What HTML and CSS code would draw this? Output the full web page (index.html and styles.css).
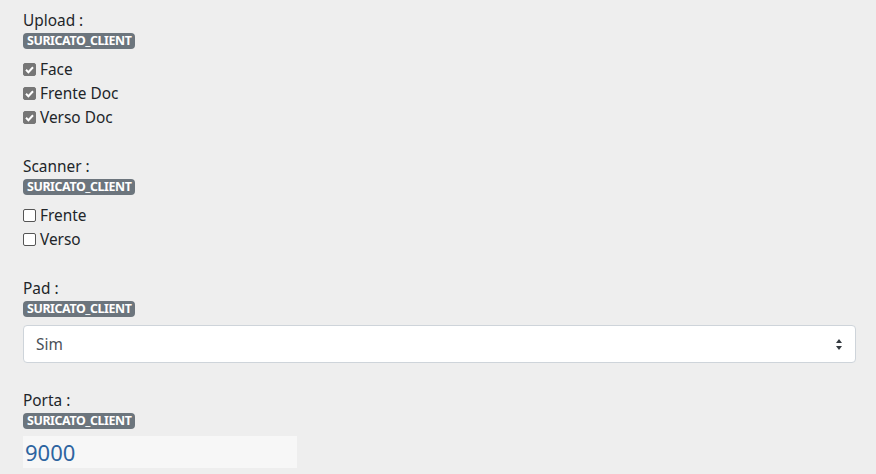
FILE: index.html
```html
<!DOCTYPE html>
<html lang="pt">
<head>
  <meta charset="UTF-8" />
  <meta name="viewport" content="width=device-width, initial-scale=1" />
  <title>Configuração</title>
  <link rel="stylesheet" href="styles.css">
</head>
<body>
  <form class="config">
    <div class="group">
      <label class="title">Upload :</label>
      <span class="badge">SURICATO_CLIENT</span>
      <div class="checks">
        <label class="check"><input type="checkbox" checked> Face</label>
        <label class="check"><input type="checkbox" checked> Frente Doc</label>
        <label class="check"><input type="checkbox" checked> Verso Doc</label>
      </div>
    </div>

    <div class="group">
      <label class="title">Scanner :</label>
      <span class="badge">SURICATO_CLIENT</span>
      <div class="checks">
        <label class="check"><input type="checkbox"> Frente</label>
        <label class="check"><input type="checkbox"> Verso</label>
      </div>
    </div>

    <div class="group">
      <label class="title">Pad :</label>
      <span class="badge">SURICATO_CLIENT</span>
      <select class="custom-select">
        <option selected>Sim</option>
        <option>Não</option>
      </select>
    </div>

    <div class="group">
      <label class="title">Porta :</label>
      <span class="badge">SURICATO_CLIENT</span>
      <input class="port" type="text" value="9000">
    </div>
  </form>
</body>
</html>
```

FILE: styles.css
```css
:root {
  --font-sans: "Noto Sans", "Open Sans", sans-serif;
  --color-text: #212529;
  --page-bg: #eeeeee;
  --badge-bg: #6c757d;
  --border: #ced4da;
}
*, *::before, *::after { box-sizing: border-box; }

html, body {
  margin: 0;
  padding: 0;
}
body {
  background: var(--page-bg);
  font-family: var(--font-sans);
  font-size: 15.4px;
  color: var(--color-text);
  overflow: hidden;
}
.config {
  padding: 10px 20px 0 23px;
}
.group {
  margin-bottom: 27px;
}
.title {
  display: block;
  line-height: 22px;
}
.badge {
  display: table;
  margin-top: 1px;
  padding: 2px 4px;
  background: var(--badge-bg);
  color: #fff;
  font-size: 12.4px;
  font-weight: 700;
  line-height: 12px;
  letter-spacing: -0.4px;
  border-radius: 4px;
}
.checks {
  margin-top: 8px;
}
.check {
  display: flex;
  align-items: center;
  gap: 4px;
  height: 24px;
}
.check input {
  appearance: none;
  -webkit-appearance: none;
  width: 13px;
  height: 13px;
  margin: 0;
  border: 1px solid #555;
  border-radius: 2px;
  background: #fff;
}
.check input:checked {
  border-color: #767676;
  background: #767676 url("data:image/svg+xml,%3Csvg xmlns='http://www.w3.org/2000/svg' viewBox='0 0 13 13'%3E%3Cpath d='M3 6.8l2.4 2.4L10 4.3' fill='none' stroke='%23fff' stroke-width='2'/%3E%3C/svg%3E") center / 13px 13px no-repeat;
}
.custom-select {
  display: block;
  width: 833px;
  height: 38px;
  margin-top: 8px;
  padding: 6px 28px 6px 12px;
  font-family: var(--font-sans);
  font-size: 15.4px;
  color: #495057;
  background: #fff url("data:image/svg+xml,%3Csvg xmlns='http://www.w3.org/2000/svg' viewBox='0 0 6 11'%3E%3Cpath d='M3 0L0 4h6zM3 11L0 7h6z' fill='%23343a40'/%3E%3C/svg%3E") right 13px center / 6px 11px no-repeat;
  border: 1px solid var(--border);
  border-radius: 4px;
  appearance: none;
  -webkit-appearance: none;
}
.port {
  display: block;
  width: 274px;
  height: 32px;
  margin-top: 7px;
  padding: 0 2px;
  border: none;
  background: #f7f7f7;
  font-family: var(--font-sans);
  font-size: 22px;
  color: #2d64a0;
  outline: none;
}
```
